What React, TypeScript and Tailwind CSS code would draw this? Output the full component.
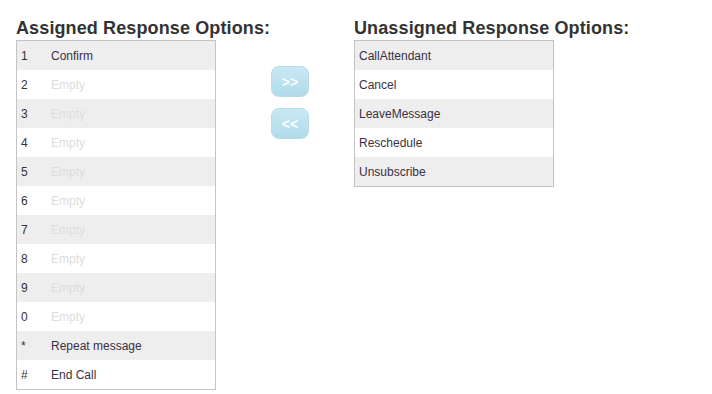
const assigned: { key: string; label: string }[] = [
  { key: "1", label: "Confirm" },
  { key: "2", label: "" },
  { key: "3", label: "" },
  { key: "4", label: "" },
  { key: "5", label: "" },
  { key: "6", label: "" },
  { key: "7", label: "" },
  { key: "8", label: "" },
  { key: "9", label: "" },
  { key: "0", label: "" },
  { key: "*", label: "Repeat message" },
  { key: "#", label: "End Call" },
];

const unassigned = ["CallAttendant", "Cancel", "LeaveMessage", "Reschedule", "Unsubscribe"];

function MoveButton({ label }: { label: string }) {
  return (
    <button
      type="button"
      className="w-[38px] h-[31px] rounded-[8px] border border-[#b5dcea] bg-gradient-to-b from-[#c9e8f3] to-[#b0dbea] text-white text-[14px] font-bold leading-none"
    >
      {label}
    </button>
  );
}

export default function App() {
  return (
    <div
      className="w-[712px] h-[394px] bg-white pt-[17px] pl-4 flex text-[#333]"
      style={{ fontFamily: '"Liberation Sans", Arial, sans-serif' }}
    >
      <div className="w-[255px]">
        <h2 className="text-[18px] font-bold leading-[23px] tracking-[0.12px] whitespace-nowrap">Assigned Response Options:</h2>
        <div className="w-[200px] border border-[#c4c4c4]">
          {assigned.map((row, i) => (
            <div
              key={row.key}
              className={`flex h-[29px] items-center text-[12px] ${i % 2 === 0 ? "bg-[#eeeeee]" : "bg-white"}`}
            >
              <span className="w-[34px] pl-1 text-[#333]">{row.key}</span>
              {row.label ? (
                <span className="text-[#3a3042]">{row.label}</span>
              ) : (
                <span className="text-[#dddddd]">Empty</span>
              )}
            </div>
          ))}
        </div>
      </div>
      <div className="flex flex-col gap-[11px] pt-[49px]">
        <MoveButton label=">>" />
        <MoveButton label="<<" />
      </div>
      <div className="ml-[45px]">
        <h2 className="text-[18px] font-bold leading-[23px] tracking-[0.12px] whitespace-nowrap">Unassigned Response Options:</h2>
        <div className="w-[200px] border border-[#c4c4c4]">
          {unassigned.map((name, i) => (
            <div
              key={name}
              className={`flex h-[29px] items-center pl-1 text-[12px] text-[#3a3042] ${i % 2 === 0 ? "bg-[#eeeeee]" : "bg-white"}`}
            >
              {name}
            </div>
          ))}
        </div>
      </div>
    </div>
  );
}
